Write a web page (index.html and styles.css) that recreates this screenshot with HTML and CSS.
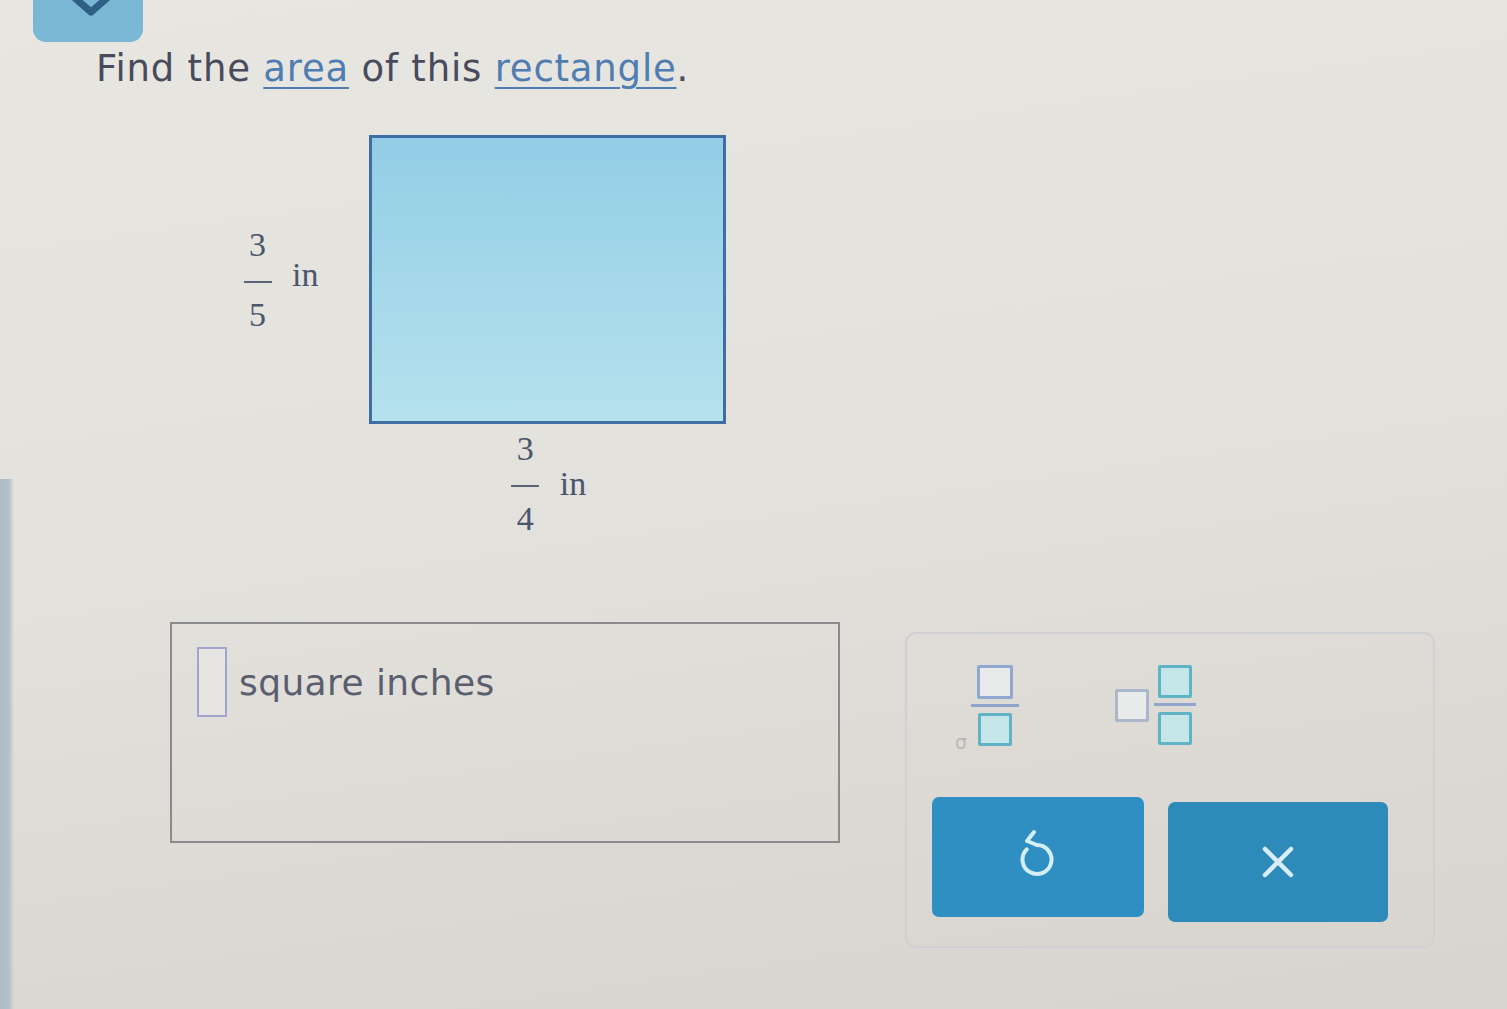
FILE: index.html
```html
<!DOCTYPE html>
<html>
<head>
<meta charset="utf-8">
<link rel="stylesheet" href="styles.css">
</head>
<body>
<div class="page">
  <div class="tab">
    <svg class="chev" width="40" height="18" viewBox="0 0 40 18"><path d="M4 -2 L20 12 L36 -2" fill="none" stroke="#2f5f86" stroke-width="7" stroke-linecap="round" stroke-linejoin="round"/></svg>
  </div>

  <h1 class="title">Find the <span class="link">area</span> of this <span class="link">rectangle</span>.</h1>

  <div class="figure">
    <div class="fig-row">
      <div class="label left-label">
        <span class="frac"><span class="num">3</span><span class="den">5</span></span>
        <span class="unit unit-left">in</span>
      </div>
      <div class="rect"></div>
    </div>
    <div class="label bottom-label">
      <span class="frac"><span class="num">3</span><span class="den">4</span></span>
      <span class="unit">in</span>
    </div>
  </div>

  <div class="answer-row">
    <div class="answer-box">
      <div class="answer-line">
        <span class="input"></span>
        <span class="answer-text">square inches</span>
      </div>
    </div>

    <div class="keypad">
      <div class="keys">
        <span class="cursor">σ</span>
        <div class="key-frac">
          <span class="box box-top"></span>
          <span class="bar"></span>
          <span class="box box-teal"></span>
        </div>
        <div class="key-mixed">
          <span class="box box-whole"></span>
          <div class="key-frac small">
            <span class="box box-teal"></span>
            <span class="bar"></span>
            <span class="box box-teal"></span>
          </div>
        </div>
      </div>
      <div class="buttons">
        <button class="btn">
          <svg class="undo" width="38" height="48" viewBox="0 0 38 48"><path d="M15 3 L8 12 L18 16" fill="none" stroke="#d4eef6" stroke-width="4" stroke-linecap="round" stroke-linejoin="round"/><path d="M18 16 A14.5 14.5 0 1 1 7.7 20.3" fill="none" stroke="#d4eef6" stroke-width="4" stroke-linecap="round"/></svg>
        </button>
        <button class="btn btn-clear">
          <svg width="34" height="34" viewBox="0 0 34 34"><path d="M4 4 L30 30 M30 4 L4 30" stroke="#d8eef6" stroke-width="4.5" stroke-linecap="round"/></svg>
        </button>
      </div>
    </div>
  </div>
</div>
</body>
</html>
```

FILE: styles.css
```css
html, body {
  margin: 0;
  padding: 0;
}
body {
  width: 1507px;
  height: 1009px;
  overflow: hidden;
  font-family: "DejaVu Sans", Verdana, sans-serif;
  background:
    linear-gradient(to right, #aebcc6 0, #b4c1ca 9px, rgba(180,193,202,0) 14px) left bottom / 16px 530px no-repeat,
    linear-gradient(172deg, #e8e6e1 0%, #e3e1dc 50%, #d7d3cd 100%);
}
.page {
  display: flex;
  flex-direction: column;
  align-items: flex-start;
}
.tab {
  margin-left: 33px;
  width: 110px;
  height: 42px;
  background: #79b7d4;
  border-radius: 0 0 13px 13px;
  display: flex;
  justify-content: center;
}
.chev {
  display: block;
  margin-left: 6px;
}
.title {
  margin: 5px 0 0 96px;
  font-size: 37px;
  letter-spacing: 0.8px;
  line-height: 44px;
  font-weight: normal;
  color: #474b5b;
}
.link {
  color: #4f7db2;
  text-decoration: underline;
  text-decoration-thickness: 2px;
  text-underline-offset: 6px;
}
.figure {
  margin: 44px 0 0 242px;
  display: flex;
  flex-direction: column;
  align-items: flex-end;
}
.fig-row {
  display: flex;
  align-items: center;
}
.label {
  display: flex;
  align-items: center;
  font-family: "Liberation Serif", "Times New Roman", serif;
  font-size: 34px;
  color: #4a566b;
}
.left-label {
  margin-right: 51px;
}
.frac {
  display: flex;
  flex-direction: column;
  align-items: center;
  width: 31px;
}
.num, .den {
  line-height: 34px;
}
.num {
  padding-bottom: 19px;
  border-bottom: 2px solid #5a6478;
  width: 28px;
  text-align: center;
}
.den {
  padding-top: 15px;
}
.unit {
  margin-left: 19px;
}
.unit-left {
  margin-top: -9px;
}
.rect {
  width: 351px;
  height: 283px;
  border: 3px solid #3d6fa6;
  background: linear-gradient(to bottom, #92cde6 0%, #a6d9ea 55%, #b5e1ed 100%);
}
.bottom-label {
  margin-top: 8px;
  width: 357px;
  justify-content: center;
  box-sizing: border-box;
}
.answer-row {
  margin: 86px 0 0 170px;
  display: flex;
  align-items: flex-start;
  gap: 65px;
}
.answer-box {
  width: 666px;
  height: 217px;
  border: 2px solid #8b8a8c;
  box-sizing: content-box;
}
.answer-line {
  display: flex;
  align-items: center;
  margin: 23px 0 0 25px;
}
.input {
  width: 26px;
  height: 66px;
  border: 2px solid #a3a3cf;
  background: #e7e5e1;
}
.answer-text {
  margin-left: 12px;
  font-size: 36px;
  letter-spacing: 0.4px;
  color: #5b5e6e;
}
.keypad {
  margin-top: 10px;
  width: 526px;
  height: 312px;
  border: 2px solid #cfd0d3;
  border-radius: 11px;
  display: flex;
  flex-direction: column;
}
.keys {
  display: flex;
  align-items: flex-start;
  padding: 31px 0 0 48px;
  height: 78px;
}
.cursor {
  font-size: 19px;
  color: #b8b8bc;
  margin-top: 66px;
  margin-right: 4px;
}
.key-frac {
  display: flex;
  flex-direction: column;
  align-items: center;
  width: 48px;
}
.box {
  display: block;
  width: 28px;
  height: 27px;
  border: 3px solid #8fa9d2;
  background: #e9eaea;
  border-radius: 2px;
}
.box-top {
  width: 30px;
  height: 28px;
}
.box-teal {
  border-color: #5fb3c5;
  background: #c4e6e8;
}
.bar {
  display: block;
  width: 48px;
  height: 3px;
  background: #8fa5cc;
  margin: 5px 0 6px;
}
.key-mixed {
  display: flex;
  align-items: center;
  margin-left: 96px;
}
.box-whole {
  width: 28px;
  height: 27px;
  border-color: #a9b6cc;
  margin-right: 5px;
}
.key-frac.small {
  width: 42px;
}
.key-frac.small .bar {
  width: 42px;
}
.buttons {
  display: flex;
  gap: 24px;
  padding: 54px 0 0 25px;
}
.btn {
  width: 212px;
  height: 120px;
  border: none;
  border-radius: 7px;
  background: #2f8fc3;
  display: flex;
  align-items: center;
  justify-content: center;
  padding: 0;
}
.btn svg {
  display: block;
}
.undo {
  margin-bottom: 8px;
}
.btn-clear {
  width: 220px;
  margin-top: 5px;
  background: #2e8ab9;
}
```
